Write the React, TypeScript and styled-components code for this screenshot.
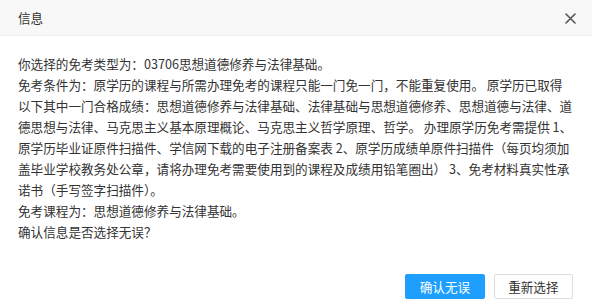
import styled, { createGlobalStyle } from 'styled-components';

const GlobalStyle = createGlobalStyle`
  html, body {
    margin: 0;
    padding: 0;
    background: #fff;
  }
  body {
    font-family: "Noto Sans CJK SC", "Liberation Sans", sans-serif;
  }
`;

const Dialog = styled.div`
  width: 592px;
  height: 304px;
  display: flex;
  flex-direction: column;
  background: #fff;
  box-sizing: border-box;
`;

const Header = styled.div`
  height: 35px;
  display: flex;
  align-items: center;
  justify-content: space-between;
  padding: 0 16px 0 18px;
  background: #f8f8f8;
  border-bottom: 1px solid #eee;
`;

const Title = styled.span`
  font-size: 12.6px;
  color: #333;
  line-height: 35px;
`;

const CloseButton = styled.button`
  width: 11px;
  height: 11px;
  padding: 0;
  border: 0;
  background: none;
  display: flex;
  cursor: pointer;
  margin-top: 2px;
`;

const Content = styled.div`
  flex: 1;
  padding: 17px 18px 0 18px;
  font-size: 12.6px;
  line-height: 21px;
  color: #333;
`;

const Line = styled.p`
  margin: 0;
  white-space: pre;
`;

const Footer = styled.div`
  display: flex;
  justify-content: flex-end;
  gap: 9px;
  padding: 0 19px 5px;
`;

const Button = styled.button<{ $primary?: boolean }>`
  height: 25px;
  padding: 0 13.5px;
  border-radius: 2px;
  font-family: inherit;
  font-size: 12.6px;
  line-height: 23px;
  cursor: pointer;
  border: 1px solid ${(p) => (p.$primary ? '#1e9fff' : '#dedede')};
  background: ${(p) => (p.$primary ? '#1e9fff' : '#fff')};
  color: ${(p) => (p.$primary ? '#fff' : '#333')};
`;

const conditionText = [
  '免考条件为：原学历的课程与所需办理免考的课程只能一门免一门，不能重复使用。 原学历已取得',
  '以下其中一门合格成绩：思想道德修养与法律基础、法律基础与思想道德修养、思想道德与法律、道',
  '德思想与法律、马克思主义基本原理概论、马克思主义哲学原理、哲学。 办理原学历免考需提供 1、',
  '原学历毕业证原件扫描件、学信网下载的电子注册备案表 2、原学历成绩单原件扫描件（每页均须加',
  '盖毕业学校教务处公章，请将办理免考需要使用到的课程及成绩用铅笔圈出） 3、免考材料真实性承',
  '诺书（手写签字扫描件）。',
].join('\n');

export default function App() {
  return (
    <>
      <GlobalStyle />
      <Dialog>
        <Header>
          <Title>信息</Title>
          <CloseButton aria-label="关闭">
            <svg width="11" height="11" viewBox="0 0 11 11">
              <path
                d="M1 1 L10 10 M10 1 L1 10"
                stroke="#555"
                strokeWidth="1.6"
                strokeLinecap="round"
              />
            </svg>
          </CloseButton>
        </Header>
        <Content>
          <Line>你选择的免考类型为：03706思想道德修养与法律基础。</Line>
          <Line>{conditionText}</Line>
          <Line>免考课程为：思想道德修养与法律基础。</Line>
          <Line>确认信息是否选择无误？</Line>
        </Content>
        <Footer>
          <Button $primary>确认无误</Button>
          <Button>重新选择</Button>
        </Footer>
      </Dialog>
    </>
  );
}
